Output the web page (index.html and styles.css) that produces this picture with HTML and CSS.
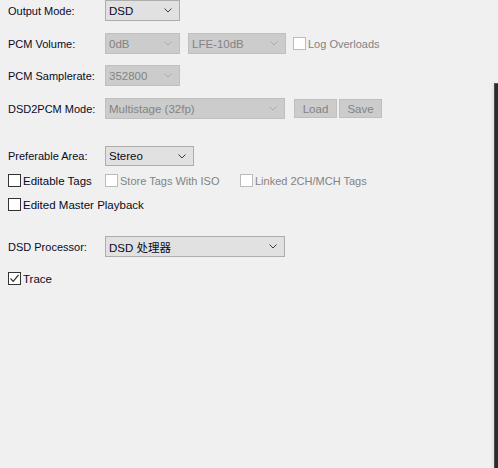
FILE: index.html
```html
<!DOCTYPE html>
<html>
<head>
<meta charset="utf-8">
<link rel="stylesheet" href="styles.css">
</head>
<body>
<div class="page">
  <div class="form">
    <div class="row r1">
      <span class="label">Output Mode:</span>
      <div class="combo w75"><span>DSD</span><svg class="chev" viewBox="0 0 8 5"><path d="M0.5 0.5 L4 4 L7.5 0.5"/></svg></div>
    </div>
    <div class="row r2">
      <span class="label">PCM Volume:</span>
      <div class="combo w75 dis"><span>0dB</span><svg class="chev" viewBox="0 0 8 5"><path d="M0.5 0.5 L4 4 L7.5 0.5"/></svg></div>
      <div class="combo w98 dis ml8"><span>LFE-10dB</span><svg class="chev" viewBox="0 0 8 5"><path d="M0.5 0.5 L4 4 L7.5 0.5"/></svg></div>
      <label class="check dis ml7"><span class="box"></span><span class="ct">Log Overloads</span></label>
    </div>
    <div class="row r3">
      <span class="label">PCM Samplerate:</span>
      <div class="combo w75 dis"><span>352800</span><svg class="chev" viewBox="0 0 8 5"><path d="M0.5 0.5 L4 4 L7.5 0.5"/></svg></div>
    </div>
    <div class="row r4">
      <span class="label">DSD2PCM Mode:</span>
      <div class="combo w180 dis"><span>Multistage (32fp)</span><svg class="chev" viewBox="0 0 8 5"><path d="M0.5 0.5 L4 4 L7.5 0.5"/></svg></div>
      <button class="btn ml9" disabled>Load</button>
      <button class="btn ml2" disabled>Save</button>
    </div>
    <div class="row r5">
      <span class="label">Preferable Area:</span>
      <div class="combo w89 h20"><span>Stereo</span><svg class="chev" viewBox="0 0 8 5"><path d="M0.5 0.5 L4 4 L7.5 0.5"/></svg></div>
    </div>
    <div class="row r6">
      <label class="check c-first"><span class="box"></span><span class="ct">Editable Tags</span></label>
      <label class="check dis c-second"><span class="box"></span><span class="ct">Store Tags With ISO</span></label>
      <label class="check dis"><span class="box"></span><span class="ct">Linked 2CH/MCH Tags</span></label>
    </div>
    <div class="row r7">
      <label class="check"><span class="box"></span><span class="ct">Edited Master Playback</span></label>
    </div>
    <div class="row r8">
      <span class="label">DSD Processor:</span>
      <div class="combo w180"><span>DSD 处理器</span><svg class="chev" viewBox="0 0 8 5"><path d="M0.5 0.5 L4 4 L7.5 0.5"/></svg></div>
    </div>
    <div class="row r9">
      <label class="check"><span class="box on"><svg viewBox="0 0 11 11"><path d="M1.5 5.5 L4.2 8.3 L9.5 2"/></svg></span><span class="ct">Trace</span></label>
    </div>
  </div>
  <div class="edge"></div>
</div>
</body>
</html>
```

FILE: styles.css
```css
* { box-sizing: border-box; }
html, body {
  margin: 0;
  padding: 0;
  background: #f0f0f0;
  width: 498px;
  height: 468px;
  overflow: hidden;
}
body {
  font-family: "Liberation Sans", "Noto Sans CJK SC", sans-serif;
  font-size: 11px;
  color: #0a0a1e;
}
.page {
  display: flex;
  height: 468px;
}
.form {
  flex: 1;
  padding-left: 8px;
}
.edge {
  width: 4px;
  margin-top: 83px;
  background: #2b2b2b;
  border-top: 1px solid #5a5a5a;
  border-left: 1px solid #4a4a4a;
  box-shadow: -2px 0 3px rgba(0,0,0,0.06);
}
.row {
  display: flex;
  align-items: center;
}
.label {
  width: 97px;
  flex: none;
}
.combo {
  height: 21px;
  display: flex;
  align-items: center;
  justify-content: space-between;
  padding: 0 7px 0 3px;
  background: #e1e1e1;
  border: 1px solid #adadad;
  flex: none;
}
.combo > span { font-size: 11.5px; }
.combo.dis {
  background: #cccccc;
  border-color: #bfbfbf;
  color: #838383;
}
.chev {
  width: 8px;
  height: 5px;
  fill: none;
  stroke: #3c3c3c;
  stroke-width: 1;
}
.combo.dis .chev { stroke: #aaaaaa; }
.w75 { width: 75px; }
.w98 { width: 98px; }
.w89 { width: 89px; }
.w180 { width: 180px; }
.h20 { height: 20px; }
.ml8 { margin-left: 8px; }
.ml7 { margin-left: 7px; }
.ml9 { margin-left: 9px; }
.ml2 { margin-left: 2px; }
.check {
  display: flex;
  align-items: center;
}
.box {
  width: 13px;
  height: 13px;
  border: 1px solid #333333;
  background: #ffffff;
  flex: none;
  display: flex;
}
.box svg {
  width: 11px;
  height: 11px;
  fill: none;
  stroke: #333333;
  stroke-width: 1.2;
}
.ct { margin-left: 2px; font-size: 11.5px; }
.check.dis .box { border-color: #bcbcbc; }
.check.dis .ct { color: #838383; font-size: 11px; }
.btn {
  width: 43px;
  height: 19px;
  font: inherit;
  font-size: 11.5px;
  padding: 0;
  background: #cccccc;
  border: 1px solid #bfbfbf;
  color: #838383;
}
.r1 { height: 21px; }
.r2 { height: 21px; margin-top: 12px; }
.r3 { height: 21px; margin-top: 11px; }
.r4 { height: 21px; margin-top: 12px; }
.r5 { height: 20px; margin-top: 27px; }
.r6 { height: 15px; margin-top: 7px; }
.r7 { height: 15px; margin-top: 9px; }
.r8 { height: 21px; margin-top: 24px; }
.r9 { height: 15px; margin-top: 14px; }
.c-first { width: 97px; }
.c-second { width: 135px; }
```
